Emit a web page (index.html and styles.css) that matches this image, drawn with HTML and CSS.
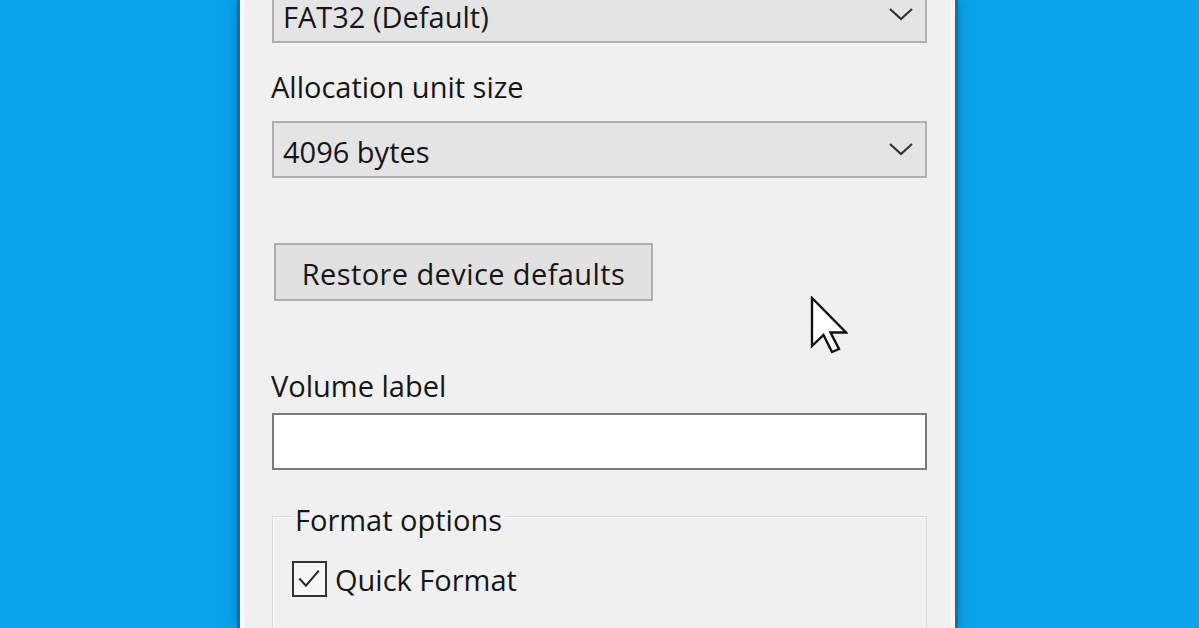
FILE: index.html
```html
<!DOCTYPE html>
<html>
<head>
	<meta charset="utf-8">
	<title>Format</title>
	<link rel="stylesheet" href="styles.css">
</head>
<body>
	<div class="window">
		<div class="panel">
			<div class="combo first">
				<span>FAT32 (Default)</span>
				<svg class="chevron" viewBox="0 0 24 13"><path d="M1 1 L12 11 L23 1"/></svg>
			</div>

			<label class="field-label">Allocation unit size</label>
			<div class="combo">
				<span>4096 bytes</span>
				<svg class="chevron" viewBox="0 0 24 13"><path d="M1 1 L12 11 L23 1"/></svg>
			</div>

			<button class="restore">Restore device defaults</button>

			<label class="field-label volume">Volume label</label>
			<div class="textbox"></div>

			<fieldset class="options">
				<legend>Format options</legend>
				<label class="check">
					<span class="box">
						<svg viewBox="0 0 35 35"><path d="M6 17 L13.5 25 L28 8"/></svg>
					</span>
					Quick Format
				</label>
			</fieldset>
		</div>
	</div>

	<svg class="cursor" viewBox="0 0 38 58">
		<path d="M2 2 L2 50 L13.5 39 L22 56 L29 53 L20.5 36.5 L36 36.5 Z"/>
	</svg>
</body>
</html>
```

FILE: styles.css
```css
body {
	margin: 0;
	height: 628px;
	overflow: hidden;
	background-color: #09a4ec;
	font-family: "Open Sans", "Noto Sans", sans-serif;
	font-size: 29px;
	color: #161616;
}

.window {
	margin-left: 237px;
	width: 715px;
	height: 628px;
	border-left: 3px solid #1c6e9f;
	border-right: 3px solid #1c6e9f;
	background-color: #f0f0f0;
	box-shadow: 0 0 12px rgba(0, 40, 80, 0.35);
}

.panel {
	height: 100%;
	padding-left: 28px;
	border-left: 4px solid #fbf8f9;
	border-right: 4px solid #f8f4f4;
	display: flex;
	flex-direction: column;
	align-items: flex-start;
}

.combo {
	box-sizing: border-box;
	width: 655px;
	height: 57px;
	padding: 0 12px 0 9px;
	display: flex;
	align-items: center;
	justify-content: space-between;
	background-color: #e4e4e4;
	border: 2px solid #b0b0b0;
}

.combo span {
	padding-top: 4px;
	line-height: 24px;
}

.combo.first {
	margin-top: -14px;
}

.chevron {
	width: 24px;
	height: 13px;
	fill: none;
	stroke: #333;
	stroke-width: 2.2;
}

.field-label {
	display: block;
	margin-top: 26px;
	margin-bottom: 17px;
	line-height: 35px;
	margin-left: -1px;
}

.field-label.volume {
	margin-top: 67px;
	margin-bottom: 10px;
}

.restore {
	margin-top: 65px;
	margin-left: 2px;
	box-sizing: border-box;
	width: 379px;
	height: 58px;
	padding: 3px 0 0;
	background-color: #e1e1e1;
	border: 2px solid #adadad;
	font-family: inherit;
	font-size: 29px;
	letter-spacing: 0.4px;
	color: #161616;
}

.textbox {
	box-sizing: border-box;
	width: 655px;
	height: 57px;
	background-color: #fff;
	border: 2px solid #7a7a7a;
}

.options {
	margin: 26px 0 0;
	box-sizing: border-box;
	width: 655px;
	flex: 1;
	padding: 24px 0 0 19px;
	border: 1px solid #dcdcdc;
	border-bottom: none;
	box-shadow: inset 1px 1px 0 #fafafa;
}

.options legend {
	padding: 6px 3px 0;
	line-height: 35px;
}

.check {
	display: flex;
	align-items: center;
	gap: 8px;
	line-height: 35px;
}

.box {
	box-sizing: border-box;
	width: 35px;
	height: 36px;
	border: 2px solid #333;
	background-color: #f7f7f7;
}

.box svg {
	display: block;
	width: 31px;
	height: 32px;
	fill: none;
	stroke: #2a2a2a;
	stroke-width: 2.4;
}

.cursor {
	position: absolute;
	left: 810px;
	top: 296px;
	width: 38px;
	height: 58px;
	fill: #fff;
	stroke: #111;
	stroke-width: 2.4;
	stroke-linejoin: miter;
}
```
